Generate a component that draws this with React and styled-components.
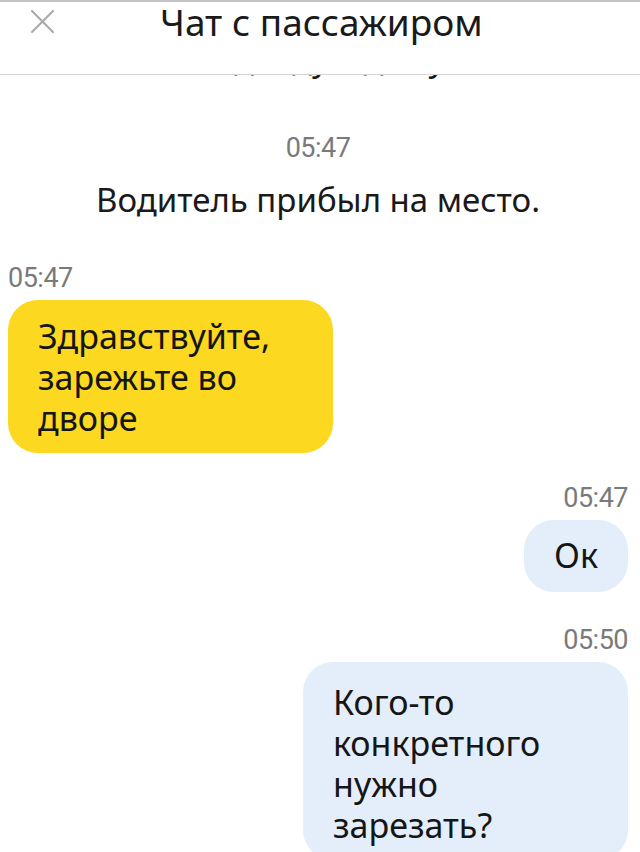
import React from "react";
import styled, { createGlobalStyle } from "styled-components";

const Global = createGlobalStyle`
  html, body { margin: 0; padding: 0; background: #fff; }
  body { width: 640px; height: 852px; overflow: hidden; }
`;

const Screen = styled.div`
  width: 640px;
  height: 852px;
  display: flex;
  flex-direction: column;
  border-top: 2px solid #c4c4c4;
  box-sizing: border-box;
  font-family: "Noto Sans", "Open Sans", sans-serif;
  color: #1d1d1d;
`;

const Header = styled.div`
  height: 73px;
  flex: none;
  display: flex;
  align-items: flex-start;
  padding: 0 0 0 30px;
  border-bottom: 1px solid #d6d6d6;
  box-sizing: border-box;
`;

const CloseBtn = styled.div`
  width: 25px;
  height: 25px;
  margin-top: 7px;
  color: #ababab;
`;

const Title = styled.div`
  margin-left: 105px;
  font-size: 37px;
  line-height: 40px;
  color: #1a1a1a;
`;

const Feed = styled.div`
  flex: 1;
  overflow: hidden;
  display: flex;
  flex-direction: column;
  padding: 0 12px 0 8px;
`;

const SystemText = styled.div`
  text-align: center;
  font-size: 33px;
  line-height: 40px;
  color: #1a1a1a;
  margin-top: ${p => p.$top || 0}px;
`;

const Time = styled.div`
  font-family: Roboto, "Liberation Sans", sans-serif;
  font-size: 27px;
  line-height: 30px;
  letter-spacing: -0.5px;
  color: #7a7a7a;
  text-align: ${p => p.$align};
  margin-top: ${p => p.$top || 0}px;
`;

const Bubble = styled.div`
  align-self: ${p => (p.$mine ? "flex-end" : "flex-start")};
  width: ${p => (p.$fit ? "auto" : "325px")};
  box-sizing: border-box;
  margin-top: 7px;
  padding: ${p => p.$pad || "16px 30px 14px 30px"};
  border-radius: 30px;
  background: ${p => (p.$mine ? "#e3eefa" : "#fcd820")};
  font-size: 34px;
  line-height: 41px;
  color: #151515;
`;

const X = () => (
  <svg width="25" height="25" viewBox="0 0 25 25" fill="none" stroke="currentColor" strokeWidth="2.2" strokeLinecap="round">
    <path d="M2 2 L23 23 M23 2 L2 23" />
  </svg>
);

export default function App() {
  return (
    <>
      <Global />
      <Screen>
        <Header>
          <CloseBtn><X /></CloseBtn>
          <Title>Чат с пассажиром</Title>
        </Header>
        <Feed>
          <SystemText $top={-36}>Подъеду к дому</SystemText>
          <Time $align="center" $top={54}>05:47</Time>
          <SystemText $top={17}>Водитель прибыл на место.</SystemText>
          <Time $align="left" $top={43}>05:47</Time>
          <Bubble>Здравствуйте, зарежьте во дворе</Bubble>
          <Time $align="right" $top={30}>05:47</Time>
          <Bubble $mine $fit $pad="15px 30px 16px 30px">Ок</Bubble>
          <Time $align="right" $top={33}>05:50</Time>
          <Bubble $mine $pad="20px 30px 14px 30px">Кого-то конкретного нужно зарезать?</Bubble>
        </Feed>
      </Screen>
    </>
  );
}
